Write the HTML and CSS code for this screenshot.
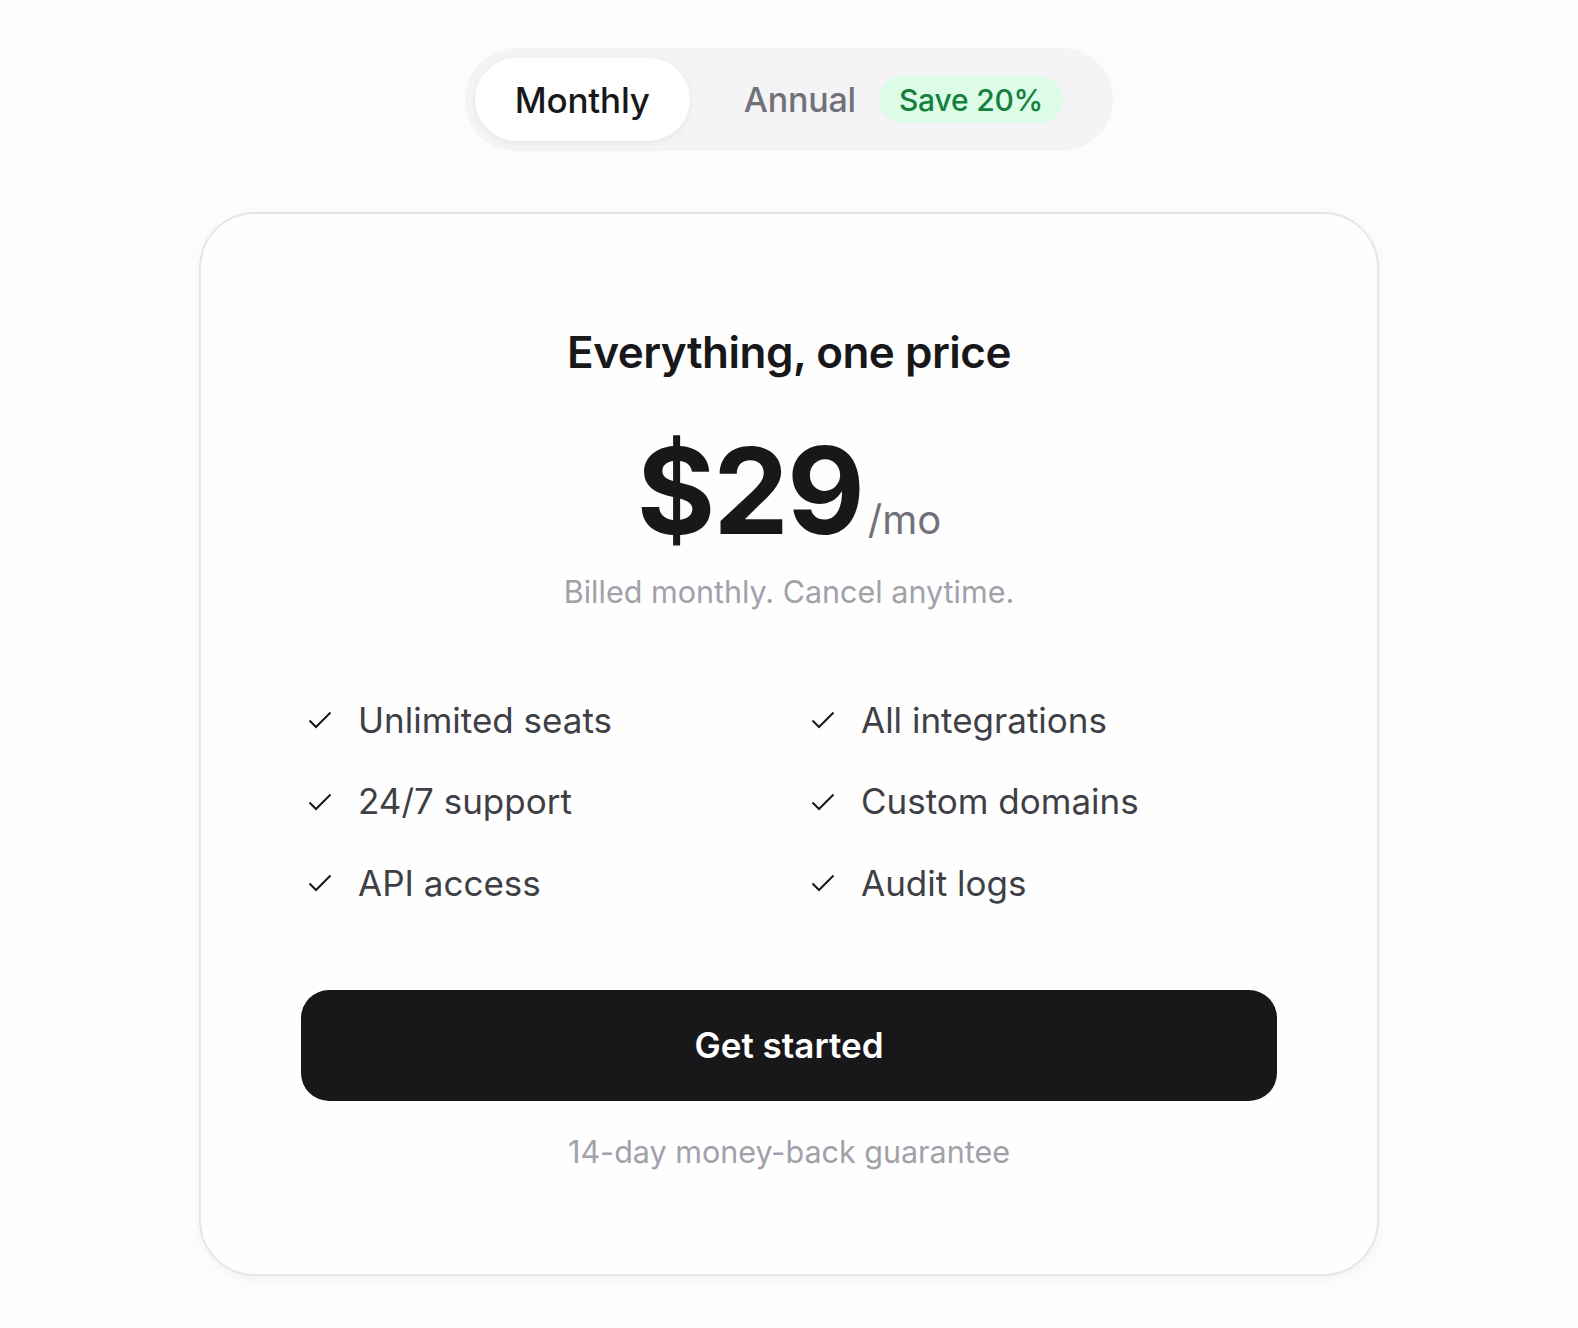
FILE: index.html
```html
<!DOCTYPE html>
<html lang="en">
  <head>
    <meta charset="UTF-8" />
    <meta name="viewport" content="width=device-width, initial-scale=1.0" />
    <title>Pricing</title>
    <link rel="stylesheet" href="styles.css">
  </head>
  <body>
    <!-- billing period switch -->
    <div class="toggle">
      <button class="opt active">Monthly</button>
      <button class="opt annual">
        Annual
        <span class="badge">Save 20%</span>
      </button>
    </div>

    <section class="card">
      <h1 class="title">Everything, one price</h1>
      <div class="price">
        <span class="amount">$29</span><span class="per">/mo</span>
      </div>
      <p class="note">Billed monthly. Cancel anytime.</p>

      <ul class="features">
        <li><svg class="check" viewBox="0 0 24 18"><path d="M1.5 9.5 L8 16 L22.5 1.5" /></svg>Unlimited seats</li>
        <li><svg class="check" viewBox="0 0 24 18"><path d="M1.5 9.5 L8 16 L22.5 1.5" /></svg>All integrations</li>
        <li><svg class="check" viewBox="0 0 24 18"><path d="M1.5 9.5 L8 16 L22.5 1.5" /></svg>24/7 support</li>
        <li><svg class="check" viewBox="0 0 24 18"><path d="M1.5 9.5 L8 16 L22.5 1.5" /></svg>Custom domains</li>
        <li><svg class="check" viewBox="0 0 24 18"><path d="M1.5 9.5 L8 16 L22.5 1.5" /></svg>API access</li>
        <li><svg class="check" viewBox="0 0 24 18"><path d="M1.5 9.5 L8 16 L22.5 1.5" /></svg>Audit logs</li>
      </ul>

      <button class="cta">Get started</button>
      <p class="guarantee">14-day money-back guarantee</p>
    </section>
  </body>
</html>
```

FILE: styles.css
```css
* {
  padding: 0;
  margin: 0;
  box-sizing: border-box;
  list-style: none;
}

body {
  min-height: 100vh;
  display: flex;
  flex-direction: column;
  align-items: center;
  padding-top: 48px;
  background-color: #fcfcfd;
  font-family: Inter, "Noto Sans", sans-serif;
  color: #18181b;
}

button {
  font: inherit;
  border: none;
  background: none;
  cursor: pointer;
}

/* 月付 / 年付 切换 */
.toggle {
  display: flex;
  align-items: center;
  height: 103px;
  padding: 10px 50px 10px 10px;
  background: #f4f3f5;
  border-radius: 999px;
}

.opt {
  height: 83px;
  display: flex;
  align-items: center;
  font-size: 35px;
  font-weight: 500;
  color: #71717a;
  letter-spacing: -0.2px;
}

.opt.active {
  padding: 0 40px;
  background: #fff;
  color: #18181b;
  border-radius: 999px;
  box-shadow: 0 2px 6px #0000000f;
}

.annual {
  padding-left: 54px;
  gap: 23px;
  font-size: 34px;
}

.badge {
  display: flex;
  align-items: center;
  height: 47px;
  padding: 0 20px;
  font-size: 30px;
  font-weight: 500;
  color: #15803d;
  background: #dcfce7;
  border-radius: 999px;
}

/* 价格卡片 */
.card {
  width: 1180px;
  margin-top: 61px;
  padding: 112px 100px 104px;
  display: flex;
  flex-direction: column;
  align-items: center;
  background: #fefefe;
  border: 2px solid #e6e5e8;
  border-radius: 56px;
  box-shadow: 0 3px 8px #0000000a;
}

.title {
  font-size: 44px;
  line-height: 52px;
  font-weight: 600;
  letter-spacing: -0.5px;
}

.price {
  margin-top: 53px;
  display: flex;
  align-items: baseline;
}

.amount {
  font-size: 120px;
  line-height: 1;
  font-weight: 700;
  letter-spacing: -2px;
}

.per {
  margin-left: 5px;
  font-size: 40px;
  color: #71717a;
}

.note {
  margin-top: 23px;
  font-size: 30.5px;
  line-height: 36px;
  color: #a1a1aa;
}

.features {
  align-self: stretch;
  margin-top: 90px;
  padding-left: 7px;
  display: grid;
  grid-template-columns: 503px 1fr;
  row-gap: 40.7px;
}

.features li {
  display: flex;
  align-items: center;
  gap: 26px;
  font-size: 35px;
  line-height: 40.8px;
  color: #3f3f46;
}

.check {
  width: 24px;
  height: 18px;
  fill: none;
  stroke: #18181b;
  stroke-width: 2;
}

.cta {
  align-self: stretch;
  margin-top: 86px;
  height: 111px;
  border-radius: 28px;
  background: #18181b;
  color: #fff;
  font-size: 35px;
  font-weight: 600;
}

.guarantee {
  margin-top: 33px;
  font-size: 30.5px;
  line-height: 36px;
  color: #a1a1aa;
}
```
